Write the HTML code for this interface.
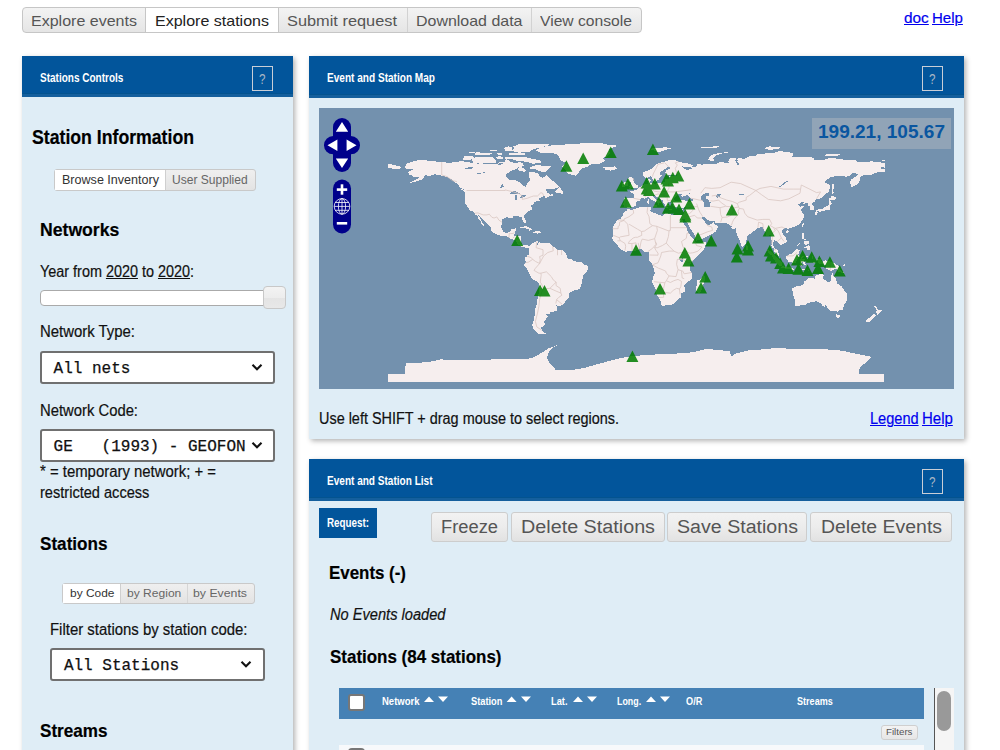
<!DOCTYPE html>
<html><head><meta charset="utf-8">
<style>
*{box-sizing:border-box;margin:0;padding:0}
html,body{width:1000px;height:750px;overflow:hidden;background:#fff;font-family:"Liberation Sans",sans-serif;color:#111}
.a{position:absolute}
.t{position:absolute;white-space:pre;line-height:1;transform-origin:0 0}
.panel{position:absolute;background:#dfedf6;box-shadow:2px 2px 5px rgba(0,0,0,.30)}
.hdr{position:absolute;background:linear-gradient(to bottom,#02559b 0,#02559b calc(100% - 4px),#03538f calc(100% - 4px),#03538f calc(100% - 3px),#145f9d calc(100% - 3px))}
.hlp{position:absolute;border:1px solid #c9ced6}
.lnk{color:#0000ee;text-decoration:underline}
.sel{position:absolute;background:#fff;border:2px solid #707070;border-radius:3px}
.tog{position:absolute;border:1px solid #c9c9c9;border-radius:3px;background:linear-gradient(#efefef,#e3e3e3);overflow:hidden}
.btn{position:absolute;border:1px solid #cdcdcd;border-radius:3px;background:linear-gradient(#f2f2f2 0%,#ececec 50%,#e2e2e2 100%)}
u{text-decoration:underline}
</style></head><body>
<div class="a" style="left:22.00px;top:7.00px;width:620.00px;height:26.00px;border:1px solid #c6c6c6;border-radius:4px;background:linear-gradient(#f3f3f3,#e5e5e5);"></div>
<div class="a" style="left:145.00px;top:7.00px;width:134.00px;height:26.00px;background:#fff;border:1px solid #c6c6c6;"></div>
<div class="a" style="left:407.00px;top:8.00px;width:1.00px;height:24.00px;background:#d2d2d2;"></div>
<div class="a" style="left:531.00px;top:8.00px;width:1.00px;height:24.00px;background:#d2d2d2;"></div>
<span class="t fit" style="left: 31px; top: 13.3px; font-size: 15px; color: rgb(85, 85, 85); --w: 106; transform: scaleX(1.0682);">Explore events</span>
<span class="t fit" style="left: 155px; top: 13.3px; font-size: 15px; color: rgb(34, 34, 34); --w: 114; transform: scaleX(1.0681);">Explore stations</span>
<span class="t fit" style="left: 287px; top: 13.3px; font-size: 15px; color: rgb(85, 85, 85); --w: 110; transform: scaleX(1.0903);">Submit request</span>
<span class="t fit" style="left: 415.5px; top: 13.3px; font-size: 15px; color: rgb(85, 85, 85); --w: 106.5; transform: scaleX(1.0642);">Download data</span>
<span class="t fit" style="left: 540px; top: 13.3px; font-size: 15px; color: rgb(85, 85, 85); --w: 92; transform: scaleX(1.044);">View console</span>
<span class="t fit" style="left: 904.1px; top: 10.08px; font-size: 15.5px; color: rgb(0, 0, 238); --w: 24.8; -webkit-text-stroke: 0.2px currentcolor; text-decoration: underline; transform: scaleX(0.992);">doc</span>
<span class="t fit" style="left: 932.4px; top: 10.08px; font-size: 15.5px; color: rgb(0, 0, 238); --w: 30.9; -webkit-text-stroke: 0.2px currentcolor; text-decoration: underline; transform: scaleX(0.9689);">Help</span>
<div class="panel" style="left:22.00px;top:56.00px;width:271.00px;height:744.00px;"></div>
<div class="hdr" style="left:22.00px;top:56.00px;width:271.00px;height:41.00px;"></div>
<span class="t fit" style="left: 39.9px; top: 71.54px; font-size: 12px; font-weight: 700; color: rgb(255, 255, 255); --w: 83.4; transform: scaleX(0.8339);">Stations Controls</span>
<div class="hlp" style="left:252.00px;top:66.00px;width:21.00px;height:25.00px;"></div>
<span class="t fit" style="left: 259px; top: 72.15px; font-size: 14px; color: rgb(170, 182, 196); --w: 6.5; transform: scaleX(0.8337);">?</span>
<span class="t fit" style="left: 32px; top: 127.07px; font-size: 20px; font-weight: 700; color: rgb(0, 0, 0); --w: 162; -webkit-text-stroke: 0.2px currentcolor; transform: scaleX(0.8837);">Station Information</span>
<div class="tog" style="left:54.00px;top:169.00px;width:201.50px;height:21.50px;"></div>
<div class="a" style="left:55.00px;top:170.00px;width:109.50px;height:19.50px;background:#fff;"></div>
<div class="a" style="left:164.50px;top:170.00px;width:1.00px;height:19.50px;background:#cfcfcf;"></div>
<span class="t fit" style="left: 62px; top: 174.34px; font-size: 12px; color: rgb(51, 51, 51); --w: 97; transform: scaleX(1.0462);">Browse Inventory</span>
<span class="t fit" style="left: 172px; top: 174.34px; font-size: 12px; color: rgb(102, 102, 102); --w: 75.7; transform: scaleX(1.0043);">User Supplied</span>
<span class="t fit" style="left: 39.6px; top: 220.32px; font-size: 19px; font-weight: 700; color: rgb(0, 0, 0); --w: 79.3; -webkit-text-stroke: 0.2px currentcolor; transform: scaleX(0.9271);">Networks</span>
<span class="t fit" style="left: 40px; top: 263.76px; font-size: 16px; color: rgb(17, 17, 17); --w: 154; -webkit-text-stroke: 0.2px currentcolor; transform: scaleX(0.9001);">Year from <u>2020</u> to <u>2020</u>:</span>
<div class="a" style="left:40.00px;top:290.00px;width:226.00px;height:16.00px;background:#fff;border:1px solid #aaa;border-radius:4px 0 0 4px;"></div>
<div class="a" style="left:263.00px;top:286.00px;width:23.00px;height:23.00px;background:linear-gradient(#f3f3f3 0%,#ededed 50%,#e4e4e4 51%,#e8e8e8 100%);border:1px solid #c8c8c8;border-radius:4px;"></div>
<span class="t fit" style="left: 40px; top: 324.46px; font-size: 16px; color: rgb(17, 17, 17); --w: 95; -webkit-text-stroke: 0.2px currentcolor; transform: scaleX(0.9317);">Network Type:</span>
<div class="sel" style="left:40.00px;top:351.00px;width:235.00px;height:33.00px;"></div>
<span class="t" style="left:53.60px;top:361.04px;font-size:16px;color:#111;font-family:'Liberation Mono',monospace;-webkit-text-stroke:0.25px currentColor;">All nets</span>
<svg class="a" style="left:251px;top:363px" width="12" height="9" viewBox="0 0 12 9"><path d="M1.5 1.8 L6 6.3 L10.5 1.8" fill="none" stroke="#111" stroke-width="2.1"></path></svg>
<span class="t fit" style="left: 40px; top: 402.86px; font-size: 16px; color: rgb(17, 17, 17); --w: 98; -webkit-text-stroke: 0.2px currentcolor; transform: scaleX(0.926);">Network Code:</span>
<div class="sel" style="left:40.00px;top:429.00px;width:235.00px;height:33.00px;"></div>
<span class="t" style="left:53.60px;top:438.64px;font-size:16px;color:#111;font-family:'Liberation Mono',monospace;-webkit-text-stroke:0.25px currentColor;">GE   (1993) - GEOFON</span>
<svg class="a" style="left:251px;top:441px" width="12" height="9" viewBox="0 0 12 9"><path d="M1.5 1.8 L6 6.3 L10.5 1.8" fill="none" stroke="#111" stroke-width="2.1"></path></svg>
<span class="t fit" style="left: 40px; top: 464.46px; font-size: 16px; color: rgb(17, 17, 17); --w: 176; -webkit-text-stroke: 0.2px currentcolor; transform: scaleX(0.9313);">* = temporary network; + =</span>
<span class="t fit" style="left: 40px; top: 484.96px; font-size: 16px; color: rgb(17, 17, 17); --w: 109.4; -webkit-text-stroke: 0.2px currentcolor; transform: scaleX(0.9113);">restricted access</span>
<span class="t fit" style="left: 39.9px; top: 533.62px; font-size: 19px; font-weight: 700; color: rgb(0, 0, 0); --w: 67.5; -webkit-text-stroke: 0.2px currentcolor; transform: scaleX(0.9006);">Stations</span>
<div class="tog" style="left:62.00px;top:583.00px;width:193.00px;height:21.00px;"></div>
<div class="a" style="left:63.00px;top:584.00px;width:56.50px;height:19.00px;background:#fff;"></div>
<div class="a" style="left:119.50px;top:584.00px;width:1.00px;height:19.00px;background:#cfcfcf;"></div>
<div class="a" style="left:186.50px;top:584.00px;width:1.00px;height:19.00px;background:#d6d6d6;"></div>
<span class="t fit" style="left: 70px; top: 588.47px; font-size: 11.5px; color: rgb(51, 51, 51); --w: 44.4; transform: scaleX(1.0363);">by Code</span>
<span class="t fit" style="left: 126.7px; top: 588.47px; font-size: 11.5px; color: rgb(102, 102, 102); --w: 54.3; transform: scaleX(1.0483);">by Region</span>
<span class="t fit" style="left: 193.3px; top: 588.47px; font-size: 11.5px; color: rgb(102, 102, 102); --w: 54; transform: scaleX(1.0693);">by Events</span>
<span class="t fit" style="left: 50px; top: 622.06px; font-size: 16px; color: rgb(17, 17, 17); --w: 197.5; -webkit-text-stroke: 0.2px currentcolor; transform: scaleX(0.9331);">Filter stations by station code:</span>
<div class="sel" style="left:50.00px;top:648.00px;width:215.00px;height:33.00px;"></div>
<span class="t" style="left:63.90px;top:658.04px;font-size:16px;color:#111;font-family:'Liberation Mono',monospace;-webkit-text-stroke:0.25px currentColor;">All Stations</span>
<svg class="a" style="left:240px;top:660px" width="12" height="9" viewBox="0 0 12 9"><path d="M1.5 1.8 L6 6.3 L10.5 1.8" fill="none" stroke="#111" stroke-width="2.1"></path></svg>
<span class="t fit" style="left: 39.9px; top: 721.02px; font-size: 19px; font-weight: 700; color: rgb(0, 0, 0); --w: 67.4; -webkit-text-stroke: 0.2px currentcolor; transform: scaleX(0.8987);">Streams</span>
<div class="panel" style="left:309.00px;top:56.00px;width:655.00px;height:382.50px;"></div>
<div class="hdr" style="left:309.00px;top:56.00px;width:655.00px;height:42.00px;"></div>
<span class="t fit" style="left: 327px; top: 71.84px; font-size: 12px; font-weight: 700; color: rgb(255, 255, 255); --w: 108; transform: scaleX(0.8392);">Event and Station Map</span>
<div class="hlp" style="left:922.00px;top:66.00px;width:21.00px;height:25.00px;"></div>
<span class="t fit" style="left: 929px; top: 72.15px; font-size: 14px; color: rgb(170, 182, 196); --w: 6.5; transform: scaleX(0.8337);">?</span>
<svg class="a" style="left:319px;top:108px" width="635" height="281" viewBox="0 0 635 281" shape-rendering="crispEdges">
<rect width="635" height="281" fill="#7391ae"></rect>
<path d="M69.0,55.6 74.5,57.0 80.0,58.0 82.8,59.1 80.0,61.1 74.5,60.7 69.0,59.8ZM85.5,59.6 87.6,55.9 92.4,53.8 101.0,51.8 107.6,52.5 113.1,53.1 122.7,54.0 131.0,54.9 139.3,53.6 141.3,52.7 148.9,54.2 155.8,55.1 161.3,56.0 168.2,55.6 173.7,56.3 182.0,56.6 184.7,54.9 187.5,51.1 190.2,52.9 195.8,55.6 199.9,54.1 204.0,54.9 204.7,58.4 199.2,58.8 197.1,61.1 192.0,62.8 187.5,66.0 187.2,69.0 189.6,71.5 195.8,72.2 199.9,73.8 203.6,77.3 206.8,79.0 208.2,74.9 210.9,72.4 210.2,68.7 209.5,64.2 215.0,64.2 219.2,65.7 221.2,68.8 224.0,69.7 227.4,67.1 229.5,69.4 232.3,72.2 235.7,74.2 238.5,77.0 240.3,78.4 237.8,80.0 234.3,80.8 228.8,80.8 225.4,82.2 228.1,82.8 227.4,84.1 231.6,86.6 234.3,86.3 234.3,87.3 230.2,88.6 226.5,89.9 225.4,88.0 224.0,88.7 220.6,89.9 219.5,91.4 220.6,92.5 217.8,93.2 215.0,94.2 214.8,95.6 212.3,97.4 213.0,101.5 210.9,102.5 208.2,104.3 205.4,106.6 205.1,109.4 206.8,113.1 206.5,115.3 205.1,115.4 204.3,113.5 203.1,111.4 202.9,109.4 201.3,108.7 198.5,108.1 194.4,108.3 194.0,110.0 192.3,109.8 187.5,109.4 183.1,111.7 182.7,115.6 182.3,119.4 183.1,121.8 184.7,123.8 186.8,124.9 190.2,124.4 191.9,123.1 192.6,121.1 197.1,120.4 196.4,123.8 195.5,125.9 195.3,128.0 198.5,128.1 201.3,128.2 202.2,129.3 202.0,132.8 201.7,134.8 204.0,137.3 207.5,136.9 210.4,138.0 210.6,139.1 209.3,140.1 206.5,139.9 205.0,139.0 202.6,138.6 198.9,136.2 196.4,132.1 194.0,131.5 190.9,130.7 188.9,128.6 186.1,128.0 183.4,128.1 179.2,126.9 174.4,124.8 171.6,122.4 171.6,118.6 169.6,116.9 166.4,114.2 164.1,111.6 162.4,110.0 158.8,106.5 160.6,109.4 161.6,111.4 162.7,113.5 164.8,116.7 165.4,118.4 163.8,116.9 162.4,116.0 162.0,113.5 159.7,111.4 158.6,108.3 156.2,106.3 155.5,104.9 153.7,103.2 150.8,102.5 149.0,99.6 148.2,98.1 146.4,95.6 145.7,94.3 145.5,90.8 146.2,85.9 145.2,83.3 146.8,83.5 144.8,81.1 140.9,80.0 140.0,77.7 137.2,74.9 135.8,74.2 133.1,71.5 129.6,69.8 127.6,69.1 124.1,67.7 120.0,67.3 115.8,66.2 113.1,67.3 108.3,68.4 107.9,66.4 105.5,68.3 104.1,70.8 101.4,72.2 98.6,73.1 95.2,73.8 91.7,74.8 90.1,74.9 95.2,72.6 99.3,70.6 100.0,69.1 96.6,69.3 93.8,69.3 93.4,67.3 89.7,66.6 89.3,63.9 91.7,62.9 95.2,61.1 91.7,61.0 88.3,61.0 85.5,59.6ZM216.4,42.3 222.6,45.0 233.0,45.0 237.1,46.0 239.8,48.3 241.2,51.5 242.6,52.9 246.7,54.5 245.4,56.3 243.3,58.7 246.0,61.1 248.1,64.6 250.2,66.0 256.4,67.6 258.4,66.6 260.5,63.2 263.3,59.8 267.4,59.3 272.9,56.0 281.2,55.5 286.0,52.9 283.9,50.1 287.4,48.7 290.8,45.3 290.1,41.2 293.6,39.5 300.5,37.7 289.4,37.0 282.6,35.2 272.9,34.8 261.9,35.4 250.9,36.3 241.2,36.7 234.3,37.0 228.8,38.0 223.3,39.2 219.2,40.7 216.4,42.3ZM283.5,59.6 284.6,58.7 287.4,58.7 292.2,58.8 295.6,58.4 297.0,59.6 298.3,60.4 296.3,61.4 291.5,62.6 288.1,62.1 285.7,62.0 286.7,60.7 283.5,59.6ZM231.9,58.1 228.1,62.1 226.1,64.3 220.6,63.2 217.1,61.4 210.2,61.4 211.6,59.3 216.4,57.3 215.7,55.6 223.3,54.2 220.6,52.5 213.7,50.8 206.8,49.1 198.5,48.6 193.0,49.1 193.7,51.5 199.9,53.3 206.8,53.6 210.9,54.9 215.0,56.3 223.3,57.7 231.9,58.1ZM154.4,54.9 161.3,55.6 171.0,55.2 177.2,54.9 177.2,52.2 173.7,49.4 165.4,48.7 158.6,49.0 153.7,50.1 153.0,52.2 154.4,54.9ZM144.1,51.5 151.7,51.8 155.8,50.1 153.0,47.6 145.5,47.6 144.1,51.5ZM193.0,39.1 199.9,36.3 213.7,35.6 231.6,36.6 223.3,39.1 213.7,41.4 209.5,44.2 199.9,44.6 193.0,43.2ZM190.2,47.1 205.4,47.2 206.8,45.0 193.0,44.6 190.2,45.6ZM186.1,42.5 193.0,42.5 195.8,39.1 188.9,38.4 184.7,39.8ZM155.8,46.7 171.0,46.7 173.7,45.3 157.2,44.3ZM179.2,46.7 183.4,46.9 183.4,45.3 177.8,44.9ZM148.9,44.6 157.2,43.6 154.4,45.3ZM171.0,42.5 180.6,41.4 176.5,43.2ZM176.5,50.1 183.4,51.5 184.7,48.7 179.2,48.3ZM179.2,55.6 184.7,54.9 184.7,54.0 180.6,54.2ZM186.1,50.8 193.0,50.8 193.0,48.7 186.1,48.7ZM198.5,62.1 206.1,64.2 206.8,62.1 202.6,59.1 198.5,59.8ZM210.4,138.0 212.3,136.6 213.0,135.4 215.0,134.6 217.1,133.7 218.5,132.9 219.2,134.2 218.2,135.5 218.5,136.9 219.5,134.8 220.6,134.2 222.6,135.3 226.1,135.4 228.8,135.4 230.9,135.4 232.3,136.5 233.6,138.3 235.7,139.5 237.8,141.5 240.5,141.9 243.3,142.3 245.6,143.8 246.7,145.2 248.1,147.5 248.1,149.6 250.2,151.1 252.2,151.0 255.7,153.3 259.1,153.9 262.6,154.1 265.3,156.5 268.4,157.3 268.9,160.3 268.1,163.1 265.3,166.3 263.7,168.6 263.3,174.1 262.2,177.1 260.8,180.3 259.1,181.7 255.7,182.1 252.2,183.8 250.2,185.8 249.8,189.3 247.8,191.6 246.0,194.0 243.6,196.6 241.4,198.1 239.2,197.9 236.5,197.1 238.2,198.9 237.8,202.4 235.0,203.5 231.3,203.6 231.2,205.9 227.4,206.5 228.8,208.3 229.4,209.0 227.4,209.9 226.6,212.0 224.0,213.9 226.3,215.9 224.0,218.2 221.9,220.0 222.8,222.1 225.4,225.1 227.2,225.6 224.7,226.1 222.6,226.5 219.2,225.5 216.4,223.3 214.4,221.0 213.0,216.8 214.4,214.1 215.0,210.6 215.6,207.9 215.5,204.4 216.1,201.3 217.1,198.2 218.4,195.5 218.5,191.3 218.9,187.9 219.9,184.4 220.0,181.7 220.4,177.6 220.1,175.2 217.8,173.4 213.4,171.1 211.9,169.0 210.5,166.3 208.8,162.4 207.1,159.9 205.4,158.3 205.0,156.5 206.4,154.8 207.1,153.2 205.5,152.1 206.5,149.3 207.5,148.6 208.4,147.5 209.8,146.3 210.2,144.5 210.5,142.0 210.1,140.4 210.4,138.0ZM308.9,100.7 307.6,102.9 305.3,104.1 303.8,105.2 303.5,107.8 301.2,111.0 299.1,111.7 297.0,113.9 295.0,116.9 293.6,120.5 294.3,123.1 294.5,125.9 293.2,129.6 294.0,132.8 295.6,134.2 297.0,135.5 298.7,137.3 299.8,139.7 302.5,141.5 304.6,143.1 306.7,143.9 309.4,143.0 312.9,143.0 314.9,143.1 318.4,141.9 320.4,141.3 323.2,141.3 325.3,144.1 327.3,143.9 329.0,143.7 330.2,145.2 330.5,147.9 329.8,150.0 329.7,152.1 332.2,154.8 333.5,156.9 333.9,159.0 334.9,161.0 335.3,163.1 336.0,165.2 334.4,168.6 333.3,173.4 333.3,175.1 334.9,178.2 337.0,181.6 337.4,185.8 338.4,187.9 339.7,189.4 340.8,192.0 342.1,194.1 341.8,195.5 342.4,197.0 343.9,197.8 345.1,197.8 347.3,197.0 351.4,196.8 353.5,196.4 355.6,195.2 357.6,193.1 359.7,191.1 361.8,189.3 361.9,185.8 363.2,184.7 365.6,183.5 365.9,180.3 365.2,177.6 368.0,174.1 370.7,172.7 372.9,170.7 372.8,165.2 371.4,162.4 371.1,159.6 370.5,158.3 371.4,156.5 372.4,153.9 374.2,152.3 375.6,150.7 377.6,148.6 380.4,146.6 382.4,144.2 384.2,142.4 385.9,139.0 387.0,136.2 387.7,133.7 385.2,134.3 382.4,134.6 379.7,135.4 377.6,135.5 376.7,134.0 376.0,132.8 374.6,131.4 372.1,129.1 371.0,127.7 370.0,125.2 368.3,123.0 367.7,120.4 366.0,117.6 364.5,114.5 363.6,112.4 361.8,108.9 361.5,106.9 359.0,106.6 356.3,107.3 351.7,106.5 349.4,105.6 346.6,104.8 344.6,106.6 343.9,108.3 341.8,107.6 338.4,106.3 335.2,104.7 332.8,104.1 331.1,102.9 332.2,101.1 331.5,99.3 330.5,98.6 328.4,99.2 326.0,98.9 322.5,99.2 319.1,99.6 316.2,100.7 314.0,101.6 310.8,101.5 308.9,100.7ZM384.9,166.5 386.3,170.7 386.2,172.0 385.2,174.1 383.8,178.2 382.0,183.8 379.3,185.1 377.6,183.8 377.1,181.7 376.7,179.6 377.9,177.3 377.6,174.1 378.3,172.3 381.1,171.4 382.4,170.0 383.8,168.6 384.9,166.5ZM309.3,100.4 308.2,99.3 306.7,98.7 304.6,99.0 304.9,97.2 303.9,96.5 304.7,94.2 305.0,92.4 304.2,90.8 306.0,89.8 309.4,90.1 312.9,90.2 314.9,90.1 315.3,87.3 314.0,85.0 310.8,84.0 310.5,83.2 312.9,82.8 314.9,82.9 314.9,81.5 317.3,81.8 319.1,80.8 319.5,79.7 321.8,79.2 323.2,77.7 323.9,76.6 326.6,76.3 328.7,76.2 329.0,74.2 328.3,72.2 328.8,71.3 331.6,70.5 331.3,72.2 331.9,72.8 330.5,74.2 331.5,75.0 333.5,75.3 336.3,75.7 339.0,75.2 342.8,74.9 344.6,74.4 346.1,73.3 346.1,71.5 348.0,70.5 350.1,71.5 350.5,69.5 349.4,68.4 352.8,68.0 355.6,68.0 358.3,67.5 356.3,66.6 353.5,66.8 351.4,67.1 348.6,67.6 346.6,66.0 346.3,63.9 347.3,62.5 350.8,60.7 351.9,60.2 350.8,59.3 347.6,59.5 346.3,60.7 344.6,62.1 342.5,63.2 340.8,64.6 340.7,66.2 343.0,67.1 342.6,68.0 340.7,69.1 340.0,70.8 339.5,72.2 337.1,72.8 336.6,73.7 334.8,73.4 334.2,72.2 333.3,70.5 332.4,68.7 331.5,68.2 331.1,68.7 329.4,69.0 328.0,70.1 326.0,70.0 324.7,68.7 323.9,66.6 323.9,64.9 324.6,63.9 327.3,63.2 330.1,62.1 332.2,61.1 334.2,59.1 335.6,57.7 337.7,56.0 339.7,55.2 343.2,54.0 346.6,53.3 349.4,52.5 352.5,52.0 355.6,52.2 358.3,52.9 359.7,53.8 362.5,54.5 366.6,54.9 370.7,56.0 373.5,57.0 373.5,58.4 369.4,59.1 365.2,58.7 362.5,58.2 365.2,60.4 368.0,61.8 372.8,61.1 372.1,59.3 376.2,58.7 378.0,58.4 377.3,55.6 380.4,56.0 383.1,56.7 387.3,55.9 390.7,55.5 394.2,55.6 398.3,55.6 400.4,54.2 402.4,54.0 406.6,54.7 410.0,55.6 411.4,55.2 409.3,53.6 410.0,51.5 412.1,49.7 415.5,49.6 416.9,50.8 416.2,52.9 417.3,54.9 418.3,57.4 420.1,56.6 419.6,55.6 417.6,53.6 419.6,52.2 417.6,51.5 419.6,50.1 423.1,50.4 424.5,50.8 427.9,50.1 427.2,48.7 432.7,48.3 436.6,48.0 436.9,46.7 442.4,45.7 450.6,45.3 456.2,44.6 460.7,42.9 463.7,43.5 464.4,44.5 469.9,44.3 474.1,45.4 473.4,48.7 478.2,48.6 482.3,49.4 486.5,49.1 490.6,48.7 494.0,49.7 495.4,51.5 498.2,52.3 501.6,51.5 505.8,51.5 509.9,50.1 516.8,50.4 523.7,51.5 527.1,52.5 531.9,52.2 536.8,52.5 538.8,54.1 544.3,54.1 548.5,53.8 551.9,53.4 558.1,53.8 562.2,54.5 566.4,54.9 566.4,59.8 562.9,59.1 561.6,60.4 563.6,61.1 566.4,60.4 566.4,63.9 563.6,64.2 560.9,63.9 556.7,64.9 554.0,66.0 551.2,67.3 546.4,67.3 543.0,67.6 541.6,68.7 540.9,70.4 541.6,72.2 540.2,72.8 539.8,74.9 537.4,76.6 535.4,77.7 532.9,79.7 531.9,77.7 531.2,74.2 531.7,71.5 534.0,70.4 537.4,68.0 539.5,66.6 536.8,65.3 533.3,65.3 530.6,68.3 526.4,68.7 524.8,68.0 520.9,68.3 516.8,68.3 512.9,68.7 509.9,70.4 507.1,72.2 505.5,74.8 508.5,75.5 510.6,76.7 511.5,78.1 510.6,80.4 510.3,83.2 507.8,85.2 505.8,87.0 503.0,89.7 500.2,91.0 498.2,90.8 496.9,91.7 495.7,93.5 493.4,94.9 492.7,95.6 494.0,97.2 495.1,99.0 495.3,101.1 494.0,101.8 491.3,102.5 491.0,101.1 491.4,99.0 490.6,97.9 489.2,97.9 489.5,96.5 488.8,95.2 486.5,95.4 484.4,96.3 484.1,94.9 485.4,94.1 483.7,93.8 481.6,95.0 479.6,96.1 479.2,97.1 480.7,98.5 481.6,98.7 483.4,97.9 485.8,98.6 483.7,99.7 482.3,100.7 481.4,101.8 482.7,103.4 483.6,105.2 485.0,106.3 485.0,107.4 484.4,108.1 485.1,108.9 484.4,110.7 483.0,112.1 481.9,114.2 480.5,116.1 478.2,117.5 475.4,118.7 473.4,119.4 471.3,120.1 469.2,120.8 468.8,122.0 468.1,120.4 465.8,120.2 464.0,121.5 462.8,123.8 463.7,125.6 465.1,127.3 466.9,129.1 467.6,132.1 467.5,134.2 465.8,135.3 464.0,135.8 461.7,138.2 461.4,136.2 459.6,135.5 458.2,133.5 455.9,132.5 455.1,131.5 454.6,133.5 453.7,135.8 454.2,137.3 455.2,138.6 455.6,140.4 456.8,140.6 457.8,141.5 459.2,143.1 459.5,144.5 460.0,146.6 460.6,148.1 459.6,148.2 458.2,147.2 456.6,146.1 455.5,144.2 455.2,142.4 455.1,141.0 454.2,140.1 452.7,139.0 452.4,136.9 453.0,135.0 452.7,133.2 452.0,130.0 451.6,127.3 450.6,126.9 448.6,128.2 447.1,128.0 446.9,124.5 445.8,123.1 444.2,121.1 443.5,119.3 441.7,119.0 439.6,120.0 436.9,121.1 436.6,122.0 434.1,123.4 432.0,125.2 430.3,126.6 428.6,128.2 427.6,131.1 427.4,134.2 426.9,135.8 425.8,137.3 424.7,137.7 423.8,138.8 422.4,137.9 421.7,135.5 421.0,133.7 420.1,131.4 419.2,129.6 418.3,128.0 417.6,125.6 417.3,123.8 417.3,121.1 416.9,119.7 416.2,120.8 414.5,121.3 412.8,120.0 412.1,119.0 413.7,118.6 411.4,117.6 410.0,117.2 409.0,115.8 406.6,115.1 402.4,115.3 399.0,115.0 396.2,114.5 395.5,112.8 394.4,112.5 392.1,113.4 389.3,112.0 388.0,111.6 386.2,109.8 384.4,108.7 383.1,108.9 383.4,110.7 384.5,112.1 386.2,113.4 386.6,115.3 387.3,116.2 388.0,114.9 388.4,116.7 390.7,116.9 392.8,115.8 394.2,114.9 394.6,113.8 394.8,115.8 396.2,117.2 398.0,117.6 399.4,119.0 397.6,121.8 396.6,123.8 394.8,124.8 393.2,125.9 390.7,127.0 388.6,128.4 385.2,129.9 383.1,130.7 379.7,131.8 378.3,132.5 376.9,132.5 376.2,130.0 375.8,128.0 375.3,126.2 374.2,124.5 372.8,122.7 371.4,121.1 370.7,119.0 369.8,116.9 368.4,115.3 367.3,113.8 365.9,111.7 365.2,111.1 364.9,109.4 364.3,111.4 362.9,111.0 361.9,108.9 361.5,107.0 364.1,106.9 364.8,105.9 365.2,104.5 365.9,103.3 366.3,101.8 366.3,100.5 366.9,99.4 365.2,99.4 363.8,100.0 361.8,100.3 359.0,99.8 357.0,99.4 354.9,99.0 354.2,97.4 353.5,95.9 353.1,94.9 352.8,93.8 350.1,93.8 348.4,94.2 349.5,95.0 348.1,95.9 350.1,97.4 348.0,97.9 349.0,99.6 348.0,99.8 346.9,99.2 346.2,97.9 346.6,97.0 345.5,96.3 344.4,95.3 343.7,94.3 343.9,92.8 342.6,91.7 341.1,90.8 339.6,90.1 337.9,89.1 336.7,87.7 335.9,87.2 333.9,87.4 333.9,88.8 335.6,89.9 336.6,91.4 338.4,92.1 339.3,92.3 340.7,93.5 342.5,94.8 342.2,95.2 340.7,94.3 339.9,95.6 340.6,96.4 339.9,97.0 339.0,97.8 338.6,97.4 338.8,95.6 337.7,94.6 336.6,93.8 334.9,93.2 333.9,92.4 332.2,91.6 331.2,90.1 329.3,88.8 327.3,89.7 326.0,90.6 324.3,90.3 322.5,90.1 321.1,90.8 321.4,92.1 320.0,93.0 318.1,93.5 317.0,95.0 316.6,95.9 317.3,96.7 316.0,98.2 314.9,98.6 313.7,99.3 310.9,99.4 309.3,100.4ZM309.1,81.0 311.5,80.6 312.9,80.1 315.6,80.0 318.9,79.5 319.3,77.5 317.4,76.8 317.0,76.2 315.6,74.9 314.8,73.4 314.0,72.3 314.5,70.6 312.6,69.3 310.1,69.3 309.1,70.8 308.5,71.7 309.4,73.1 310.1,74.2 312.5,74.4 312.3,75.6 312.9,76.4 310.7,76.6 311.2,77.9 309.8,78.8 312.2,79.2 310.8,79.7 309.1,81.0ZM308.7,78.1 308.6,76.4 308.7,75.6 309.3,74.8 308.5,73.9 306.7,73.8 305.3,74.5 303.2,75.3 303.5,76.6 302.9,78.4 303.9,78.9 305.6,78.8 307.4,78.2 308.7,78.1ZM334.1,97.6 335.6,97.4 338.5,97.2 337.9,98.6 337.8,99.4 336.3,99.0 334.2,98.2ZM328.3,93.5 330.2,93.2 330.5,94.9 330.1,96.1 328.7,96.4 328.4,94.9ZM328.8,91.6 330.0,90.8 330.2,91.7 329.7,93.0 329.0,92.5ZM349.4,101.0 353.2,101.4 352.8,101.8 350.1,101.8ZM361.5,101.8 364.5,101.0 363.8,102.3 361.8,102.2ZM332.2,41.8 332.8,40.1 339.0,39.8 345.9,39.4 354.2,39.8 347.3,41.8 343.2,43.2 339.0,44.6 335.6,42.8ZM388.6,51.5 391.4,52.5 395.5,52.9 394.2,50.1 396.9,47.4 402.4,45.6 410.7,44.2 412.1,43.9 403.8,44.6 395.5,46.0 391.4,48.0 390.0,50.1ZM449.3,41.8 458.9,41.2 461.7,39.1 450.6,38.4 445.1,40.1ZM504.4,46.7 512.6,46.0 523.7,46.7 516.8,48.0 507.1,48.0ZM380.4,39.1 396.9,38.4 405.2,38.7 395.5,39.8 383.1,39.8ZM563.6,51.9 566.4,51.5 566.4,52.5 562.9,52.5ZM512.6,86.6 514.7,85.2 514.0,81.8 515.4,78.4 514.3,75.3 513.3,75.6 512.6,79.0 513.1,83.9ZM497.5,102.5 499.6,101.2 502.3,100.8 504.4,100.4 505.8,99.0 507.8,98.3 509.5,96.7 509.9,94.2 510.6,93.1 512.0,93.1 512.6,95.6 511.3,97.6 511.0,100.1 511.0,101.5 509.5,102.1 507.8,102.3 505.8,102.3 504.4,103.4 503.0,103.4 503.0,102.5 500.9,102.7 498.6,103.3ZM509.9,92.8 511.3,92.5 514.7,92.1 517.5,90.3 516.8,89.1 512.6,87.3 512.0,89.4 510.6,90.3 509.9,91.7ZM496.1,106.6 498.2,106.9 498.7,104.5 497.5,103.2 495.7,103.8ZM499.6,104.5 502.3,104.1 502.4,102.9 499.6,103.2ZM483.3,119.7 484.7,116.2 484.8,115.3 483.0,116.2 482.5,118.3ZM466.6,124.5 468.6,124.9 469.9,123.1 469.2,122.3 467.2,122.7ZM427.2,136.5 428.9,138.3 429.7,140.1 428.6,141.7 427.2,141.6 426.8,139.0ZM448.3,142.3 451.3,142.8 455.2,147.0 459.6,151.1 461.0,152.6 463.0,154.4 462.8,158.0 461.0,158.1 457.9,155.5 456.2,153.4 454.8,151.1 453.1,147.9 451.3,146.6 449.3,144.8 448.3,142.3ZM461.9,159.4 463.7,158.3 466.2,158.7 469.2,159.4 472.0,159.5 474.8,160.7 474.6,162.0 471.3,161.4 467.2,160.7 463.7,160.2 461.9,159.4ZM475.4,161.3 476.8,161.6 481.0,161.6 485.8,161.3 486.5,161.8 481.0,162.1 476.8,162.3ZM487.8,163.1 492.0,161.6 489.2,163.1 487.3,164.2ZM467.2,147.9 468.6,147.7 470.6,146.3 473.1,145.6 476.1,142.8 478.2,140.4 479.6,141.7 481.4,142.8 479.9,143.8 479.3,147.2 480.8,148.8 478.9,149.6 477.9,152.1 477.5,153.4 476.8,155.2 474.8,154.8 472.7,154.4 470.6,154.1 468.8,154.0 468.6,152.2 467.5,150.7 467.2,147.9ZM481.6,157.6 481.0,154.8 480.7,153.4 481.6,150.7 482.3,149.0 483.7,148.3 486.5,148.8 489.2,147.9 488.5,149.4 484.1,149.4 482.7,151.4 484.4,151.2 486.9,151.2 484.7,152.5 485.8,154.4 486.7,156.6 485.1,156.5 484.1,155.8 483.4,153.9 482.9,157.6ZM492.7,147.2 494.0,147.9 493.4,149.3 494.5,151.1 492.8,150.7 492.7,148.6ZM493.4,154.4 497.2,155.2 496.1,154.3ZM497.5,151.4 499.6,150.6 501.9,151.2 503.0,154.5 506.4,152.2 508.5,153.0 511.3,153.6 515.4,155.2 517.9,156.8 520.2,158.4 520.9,161.0 523.7,163.8 524.8,164.6 522.3,164.5 519.5,163.8 518.2,161.4 515.4,160.6 514.0,162.4 511.3,162.7 508.5,161.2 507.1,161.6 506.9,157.6 503.7,156.2 500.2,155.5 498.9,153.9 497.5,151.4ZM522.3,158.3 526.4,157.6 525.7,155.9 523.7,158.0ZM483.2,124.5 485.4,124.5 485.5,126.6 484.8,128.6 484.4,130.4 487.8,132.1 487.2,132.8 483.7,131.0 483.0,129.7 482.3,128.0 482.9,127.1ZM485.1,133.5 489.9,132.8 490.6,135.1 487.8,136.9 485.8,136.9 484.8,134.8ZM485.1,140.4 485.8,138.7 487.8,138.4 489.9,136.5 491.3,139.0 491.3,141.0 489.9,142.3 487.8,141.2 487.2,139.3ZM478.5,138.4 481.6,134.6 481.0,134.2 478.2,137.6ZM473.0,180.3 474.1,180.0 477.5,178.4 480.7,178.0 483.7,176.9 485.5,174.1 485.4,172.7 487.2,172.7 488.5,170.9 490.6,169.6 493.1,169.7 494.7,170.4 495.7,170.9 496.4,167.9 497.5,166.8 499.7,166.7 499.6,165.8 501.6,166.4 504.4,166.5 505.5,167.1 504.2,168.6 503.7,170.4 505.1,171.5 507.1,172.9 509.2,174.0 511.0,174.1 512.0,171.4 512.1,167.9 512.9,165.2 513.7,165.4 514.7,169.0 516.1,169.7 517.2,170.7 517.5,173.1 518.6,175.9 520.2,176.9 522.3,178.2 524.4,181.0 525.7,183.1 527.9,185.1 528.5,188.6 527.9,192.0 527.1,194.8 525.3,196.7 524.4,198.9 523.7,201.7 520.9,202.1 518.6,203.9 516.8,202.4 515.4,203.3 512.0,202.9 509.9,201.7 509.3,200.3 507.8,198.9 507.3,197.0 506.9,195.7 506.4,197.9 505.1,198.9 504.2,197.9 503.3,197.5 501.6,195.2 498.9,194.1 497.5,193.4 494.7,193.7 490.6,194.5 487.8,195.5 487.2,196.7 484.4,196.6 481.6,196.8 479.6,198.2 477.5,198.2 475.4,197.3 475.7,196.2 476.4,194.8 476.3,192.7 475.4,190.6 474.9,189.3 474.1,186.5 473.4,185.1 473.8,183.8 473.4,182.1 473.0,180.3ZM516.4,206.1 518.8,206.8 521.3,206.4 521.3,208.1 520.2,209.5 518.2,210.1 517.1,208.3 516.4,206.1ZM554.9,197.4 557.1,198.9 558.8,201.0 559.5,201.9 562.9,201.9 562.1,204.0 560.7,204.4 559.8,206.2 557.8,206.9 557.6,204.7 556.5,204.1 557.6,202.6 557.4,201.0 555.4,198.5ZM554.9,205.8 557.1,206.9 556.6,208.3 554.9,210.1 552.6,211.3 551.9,213.1 549.8,214.2 546.4,213.4 546.8,212.3 548.9,210.6 551.9,209.0 553.6,207.2ZM199.9,120.0 204.0,118.7 206.8,118.0 210.2,119.7 213.0,121.3 214.8,122.2 210.2,122.6 209.5,121.3 205.4,120.1 202.6,120.2ZM214.4,124.6 216.7,122.6 220.6,122.9 222.8,124.4 220.6,124.9 218.5,125.6 214.6,125.2ZM209.1,124.6 211.9,124.9 210.9,125.5ZM224.4,124.5 226.6,124.6 226.3,125.2 224.4,125.2ZM235.3,84.4 240.5,78.9 242.6,81.8 244.4,83.9 244.0,85.8 239.8,85.2 236.4,84.3ZM147.1,83.5 144.1,82.5 140.1,80.0 142.0,80.7 145.5,82.2ZM69.0,265.7 85.5,265.7 86.9,255.4 96.6,255.0 110.3,254.0 121.4,251.4 137.9,252.0 151.7,251.7 165.4,252.0 179.2,250.9 193.0,250.6 206.8,250.9 212.3,250.3 217.8,247.5 223.3,244.4 228.8,240.7 235.7,238.2 239.8,236.1 237.1,237.9 233.0,240.2 230.2,243.0 228.8,246.4 228.1,250.6 230.2,254.7 234.3,258.8 237.1,262.3 245.4,262.3 255.0,261.6 264.6,260.2 271.5,258.2 278.4,256.1 286.7,254.0 296.3,251.3 306.0,249.2 317.0,247.8 321.1,247.5 337.7,246.4 351.4,246.2 362.5,245.1 372.1,244.4 379.0,243.0 388.6,240.5 396.9,242.0 410.7,243.0 412.1,248.8 416.2,245.8 421.7,244.4 430.0,242.3 441.0,241.6 450.6,240.7 458.9,239.7 468.6,240.7 475.4,240.9 485.1,241.2 493.4,240.5 503.0,240.9 509.9,241.6 519.5,242.3 527.8,243.7 537.4,245.8 544.3,247.1 552.6,248.8 549.8,252.0 545.7,255.4 541.6,258.8 539.8,263.0 540.2,265.7 565.0,265.7 565.0,274.0 69.0,274.0Z" fill="#f6eeee" fill-rule="nonzero"></path>
<path d="M354.9,91.4 355.6,90.1 356.4,89.0 357.8,87.7 359.3,85.9 360.8,85.9 363.2,86.6 361.8,87.3 363.2,88.7 365.2,88.3 367.3,87.7 370.0,85.2 371.1,85.0 369.4,86.6 369.1,88.0 370.0,89.0 372.1,90.2 374.2,92.1 374.3,92.8 372.1,93.6 369.4,93.6 367.3,93.1 365.2,92.1 362.5,92.3 360.4,93.2 357.2,93.2 355.9,92.7 354.9,91.4ZM381.8,88.3 384.5,85.9 388.0,85.2 390.0,85.5 390.0,87.3 387.3,88.6 387.3,90.5 389.6,92.1 390.0,93.8 391.8,93.9 391.1,96.3 391.3,98.6 387.3,99.3 384.5,98.1 385.2,94.6 382.4,92.1 382.4,90.1 381.8,88.3ZM396.9,86.6 401.7,85.9 401.0,88.7 398.3,90.1 396.9,88.3ZM190.2,85.7 195.8,82.8 200.6,85.5 197.8,85.9 193.0,85.9ZM196.0,92.1 196.4,87.3 198.5,87.3 197.8,92.1ZM201.3,90.1 202.0,86.6 206.8,87.3 204.7,89.4ZM180.6,81.1 183.4,75.6 184.7,78.4ZM144.8,60.4 154.4,58.4 153.0,61.1ZM155.8,66.0 166.8,63.9 164.1,65.3ZM459.6,79.0 467.2,73.1 468.6,73.5 461.7,78.8ZM419.0,86.6 425.8,85.5 425.2,87.3ZM360.4,151.4 363.8,150.4 363.8,154.1 361.1,153.4Z" fill="#7391ae"></path>
<path d="M122.7,54.1 L122.7,66.9 L128.2,68.7 L133.8,72.8 L137.9,73.5M147.5,82.5 L186.1,82.5 L186.1,81.9 L194.4,83.9 L200.6,85.9 L203.3,88.0 L203.3,91.4 L208.2,90.3 L212.3,88.7 L214.4,88.0 L218.5,88.0 L221.9,84.7 L223.6,85.2 L224.7,88.0M155.7,105.2 L159.0,104.9 L164.1,106.9 L167.9,106.9 L170.3,106.2 L173.0,109.4 L175.1,110.0 L177.8,108.9 L179.9,112.1 L183.1,114.3M190.0,130.0 L190.2,125.5 L191.6,125.5 L194.1,125.5 L195.3,124.5M194.0,130.2 L195.5,128.4M196.0,132.1 L200.3,129.3M198.9,134.8 L201.8,134.8M202.8,139.0 L203.2,136.8M217.8,133.7 L217.1,139.7 L224.0,141.7 L224.0,147.2 L220.6,148.6 L221.2,151.4 L220.6,155.5M233.6,138.3 L234.3,142.8 L228.8,144.5 L224.7,147.9 L220.6,155.5 L216.4,160.3 L215.0,162.4 L219.9,165.2 L221.9,165.2 L227.4,163.8 L232.3,168.6 L234.3,172.0 L237.1,174.1 L237.1,177.6 L241.2,180.3 L241.9,185.1 L242.9,187.2 L239.8,189.3 L237.6,191.6 L243.3,196.4M222.6,222.1 L217.8,218.9 L216.4,213.4 L218.5,205.1 L219.9,198.2 L220.6,191.3 L222.6,184.4 L224.7,181.0 L222.6,176.2 L221.2,174.1M221.2,174.1 L222.2,167.2 L221.9,165.2M224.7,181.0 L230.9,180.3 L234.3,176.9 L237.1,174.1M230.9,180.3 L237.1,183.1 L241.9,185.1M206.4,154.7 L209.5,154.1 L213.7,151.4 L216.4,153.4 L220.6,155.5M208.2,148.2 L212.3,149.7 L213.7,151.4M238.5,141.7 L238.5,147.2M242.6,142.0 L242.6,147.0M237.6,191.6 L236.8,195.5M314.2,101.8 L314.7,105.2 L310.1,108.7 L305.0,111.0 L305.0,112.4 L299.1,111.8M293.6,120.7 L299.1,120.7 L299.1,118.3 L300.5,117.6 L300.5,114.2 L305.0,112.4 L308.7,116.2 L310.1,127.3 L301.2,128.9 L300.2,129.7 L294.3,127.3M310.1,116.2 L318.4,121.1 L322.5,123.5 L325.3,123.1 L333.5,117.6 L337.7,118.3 L350.1,123.1M328.7,99.2 L328.0,104.5 L330.1,108.7 L330.8,115.6 L333.5,117.6M351.4,106.6 L351.4,119.7 L351.4,122.4 L350.1,122.4 L350.1,123.1M351.4,119.7 L368.0,119.7M337.7,118.3 L338.4,122.4 L335.6,130.7 L336.3,133.5 L337.7,136.2 L335.6,139.7 L338.4,139.7 L343.2,137.6 L347.3,135.1 L349.4,128.6 L350.1,123.1M322.0,133.9 L323.2,131.1 L329.4,132.4 L335.6,130.7M322.5,123.5 L322.8,127.3 L318.4,129.3 L316.3,129.3 L314.2,130.0 L310.1,133.5 L309.4,135.5M350.1,138.3 L354.9,143.1 L359.4,145.2 L363.8,144.2 L365.9,142.4 L363.8,138.3 L362.5,133.5 L367.3,130.3 L368.0,125.2 L370.0,125.2M347.3,135.1 L350.1,138.3M376.2,134.2 L377.6,137.6 L383.1,139.0 L379.0,143.1 L374.9,144.5 L373.5,144.8 L370.7,145.2 L365.9,142.4M374.2,152.3 L372.1,154.1 L368.7,154.8 L363.8,151.4 L358.3,151.4 L357.6,156.2 L359.0,161.7 L363.8,163.1 L365.2,165.8 L372.8,164.5M333.5,156.9 L334.9,156.2 L339.0,154.8 L341.8,147.9 L342.5,144.5 L350.1,143.1 L354.9,143.1M330.5,147.0 L339.0,147.2 L339.0,145.2 L337.0,142.4 L335.6,139.7M333.5,156.9 L339.7,160.3 L341.8,161.0 L346.6,163.1 L347.3,165.2 L350.1,167.9 L347.3,172.7 L345.9,174.8 L334.9,173.7M347.3,172.7 L351.4,174.5 L354.9,172.7 L359.0,171.4 L362.5,173.4 L361.8,178.9 L360.4,181.0M345.9,174.8 L344.6,180.3 L344.6,184.4 L344.6,189.3 L339.7,189.4M344.6,184.4 L351.4,185.1 L354.2,182.4 L357.6,180.3 L360.4,181.0 L361.1,186.5M350.1,167.9 L357.0,168.6 L359.0,161.7M362.5,163.1 L363.2,170.0 L365.2,170.7M300.2,129.7 L301.3,132.9M298.4,132.8 L301.8,132.8 L306.0,135.5 L306.7,138.3 L306.0,142.4M309.4,135.5 L312.9,135.5 L313.1,142.8M313.1,135.5 L317.0,134.8 L317.0,139.0 L318.4,141.7M319.1,134.8 L320.7,141.0M320.7,141.0 L322.0,133.9M328.7,143.7 L333.5,140.4 L337.0,136.2 L336.3,133.5M307.4,92.1 L306.7,98.7M314.5,90.3 L321.4,91.6M320.4,79.7 L325.3,81.1 L328.0,82.5 L327.3,84.6 L325.3,86.3 L326.6,89.4M333.5,68.7 L334.2,66.0 L336.3,61.8 L339.0,56.3 L345.2,54.9M350.1,59.3 L345.9,54.9M358.3,67.3 L356.3,60.4 L358.3,57.0 L356.3,54.9 L359.7,53.6M349.4,75.6 L350.1,79.7 L348.0,83.9 L355.6,83.9 L372.1,81.8M336.3,75.6 L337.7,79.7 L333.5,81.1 L334.9,83.2 L340.4,83.9 L348.7,83.2M381.8,85.2 L385.9,79.7 L392.8,80.4 L401.0,79.7 L412.1,74.2 L421.7,75.6 L436.9,82.5M436.9,82.5 L441.0,80.4 L452.0,78.4 L464.4,81.1 L474.1,81.1 L481.6,81.1 L482.3,77.0 L492.0,81.8 L497.5,84.6 L501.6,83.9 L497.5,90.8M436.9,82.5 L442.4,86.6 L449.3,91.4 L461.7,92.8 L469.9,90.8 L481.0,85.2 L481.6,81.1M436.9,82.5 L430.7,87.3 L427.2,89.4 L427.2,92.1 L420.3,94.2 L418.3,95.6 L419.6,99.0 L420.3,100.4M420.3,100.4 L424.5,101.1 L425.8,105.2 L428.6,108.7 L438.2,112.1 L443.8,111.4 L450.6,111.4 L452.7,115.6 L451.3,117.6 L456.2,120.4 L463.0,119.0 L465.8,120.4M420.3,100.4 L419.0,103.2 L419.6,105.9 L414.8,111.4 L413.4,114.2 L412.8,116.5 L411.1,117.6M419.6,99.0 L415.5,99.7 L414.1,103.8 L412.1,107.3 L408.6,108.9 L403.1,109.5 L401.7,114.2M401.0,99.7 L401.7,106.6 L403.1,109.5M391.4,98.3 L401.0,99.7 L406.6,98.3 L410.0,98.6 L415.5,99.7M377.6,95.6 L378.7,98.7 L379.7,101.8 L381.1,104.5 L383.8,108.7M366.6,100.4 L374.9,98.7 L378.7,98.7M374.9,98.7 L373.8,102.5 L370.7,105.5 L368.0,106.6 L370.7,108.7 L375.6,107.3 L378.3,110.0 L383.1,110.0M376.2,126.9 L381.8,126.6 L388.6,123.8 L393.5,122.4 L392.8,119.0 L388.6,117.6 L388.0,116.2M452.7,136.2 L453.4,129.3 L452.0,126.6 L456.2,122.4 L454.8,120.4M456.2,120.4 L458.9,122.4 L460.3,125.2 L462.4,130.0 L465.1,133.5M458.2,133.5 L462.4,130.0M454.8,141.0 L456.8,142.0 L457.5,141.5M438.9,119.7 L439.6,114.2 L443.8,115.6 L444.4,121.1M467.9,147.9 L474.1,147.9 L478.2,144.2M511.3,153.6 L511.3,162.7M372.1,90.2 L380.4,92.1 L383.8,92.4M392.8,88.0 L396.9,87.3 L402.4,90.1 L407.9,92.1 L413.4,93.5 L418.3,95.6M391.4,92.8 L394.2,93.1 L399.7,92.1 L402.4,94.9 L406.6,97.6M355.6,83.9 L358.3,85.9M348.0,83.9 L344.6,86.6 L348.0,88.7 L348.4,92.8 L352.8,92.1 L355.6,89.8M335.9,87.2 L339.0,85.9 L343.2,86.6 L346.6,89.4M314.2,70.2 L314.9,72.8" fill="none" stroke="#d9c6c2" stroke-width="0.8" shape-rendering="auto"></path>
<path d="M192.2,138.0h12l-6,-11.5zM215.0,188.0h12l-6,-11.5zM219.5,188.5h12l-6,-11.5zM307.4,254.0h12l-6,-11.5zM241.4,63.8h12l-6,-11.5zM258.2,56.1h12l-6,-11.5zM285.7,49.9h12l-6,-11.5zM327.9,46.9h12l-6,-11.5zM296.8,83.5h12l-6,-11.5zM303.0,81.5h12l-6,-11.5zM300.8,99.8h12l-6,-11.5zM321.7,80.5h12l-6,-11.5zM321.7,86.6h12l-6,-11.5zM324.0,88.0h12l-6,-11.5zM329.8,81.6h12l-6,-11.5zM341.5,76.5h12l-6,-11.5zM343.0,78.5h12l-6,-11.5zM347.8,75.3h12l-6,-11.5zM353.3,73.5h12l-6,-11.5zM339.1,89.5h12l-6,-11.5zM333.8,99.8h12l-6,-11.5zM351.2,94.6h12l-6,-11.5zM364.4,101.6h12l-6,-11.5zM343.0,105.8h12l-6,-11.5zM347.4,105.0h12l-6,-11.5zM354.0,107.0h12l-6,-11.5zM360.3,112.6h12l-6,-11.5zM360.3,114.5h12l-6,-11.5zM311.0,147.8h12l-6,-11.5zM373.0,135.6h12l-6,-11.5zM386.2,138.6h12l-6,-11.5zM359.8,150.6h12l-6,-11.5zM363.4,158.6h12l-6,-11.5zM335.0,186.6h12l-6,-11.5zM380.2,174.6h12l-6,-11.5zM376.0,185.4h12l-6,-11.5zM406.9,107.6h12l-6,-11.5zM443.7,128.5h12l-6,-11.5zM412.5,146.4h12l-6,-11.5zM423.0,143.6h12l-6,-11.5zM423.0,147.5h12l-6,-11.5zM411.8,154.5h12l-6,-11.5zM444.7,148.5h12l-6,-11.5zM446.0,153.4h12l-6,-11.5zM451.0,155.5h12l-6,-11.5zM455.2,161.1h12l-6,-11.5zM458.0,165.5h12l-6,-11.5zM463.6,166.0h12l-6,-11.5zM472.0,157.6h12l-6,-11.5zM477.6,153.4h12l-6,-11.5zM473.4,166.7h12l-6,-11.5zM482.5,168.0h12l-6,-11.5zM486.7,154.8h12l-6,-11.5zM493.0,166.0h12l-6,-11.5zM494.4,159.0h12l-6,-11.5zM504.9,159.7h12l-6,-11.5zM514.7,168.5h12l-6,-11.5z" fill="#007d00" fill-opacity="0.86" shape-rendering="auto"></path>
</svg>
<svg class="a" style="left:0;top:0" width="1000" height="750">
<g fill="#00008b"><rect x="333" y="118" width="18" height="54" rx="9"></rect><rect x="324" y="136" width="36" height="18.3" rx="9.1"></rect><rect x="333" y="179.5" width="18" height="54" rx="9"></rect></g>
<g fill="#fff"><path d="M342 122L348.2 131.7H335.8Z M342 168L348.2 158.6H335.8Z M327.5 145.2L337.4 139.4V151Z M356.5 145.2L346.6 139.4V151Z"></path>
<rect x="336.8" y="188.3" width="10.4" height="2.6"></rect><rect x="340.7" y="184.3" width="2.6" height="10.4"></rect><rect x="336.8" y="222" width="10.4" height="2.6"></rect></g>
<g fill="none" stroke="#fff" stroke-width="0.8"><circle cx="342" cy="206.4" r="7.8"></circle><ellipse cx="342" cy="206.4" rx="3.6" ry="7.8"></ellipse><path d="M334.2 206.4H349.8 M335.2 202.5H348.8 M335.2 210.3H348.8 M342 198.6V214.2"></path></g>
</svg>
<div class="a" style="left:812px;top:118px;width:139px;height:31px;background:rgba(200,200,200,0.35)"></div>
<span class="t fit" style="left: 818px; top: 122.5px; font-size: 18.5px; font-weight: 700; color: rgb(10, 86, 160); --w: 127; transform: scaleX(1.0287);">199.21, 105.67</span>
<span class="t fit" style="left: 319.2px; top: 411.46px; font-size: 16px; color: rgb(17, 17, 17); --w: 300; -webkit-text-stroke: 0.2px currentcolor; transform: scaleX(0.9016);">Use left SHIFT + drag mouse to select regions.</span>
<span class="t fit" style="left: 870.1px; top: 411.06px; font-size: 16px; color: rgb(0, 0, 238); --w: 48.6; -webkit-text-stroke: 0.2px currentcolor; text-decoration: underline; transform: scaleX(0.9103);">Legend</span>
<span class="t fit" style="left: 922.3px; top: 411.06px; font-size: 16px; color: rgb(0, 0, 238); --w: 30.8; -webkit-text-stroke: 0.2px currentcolor; text-decoration: underline; transform: scaleX(0.936);">Help</span>
<div class="panel" style="left:309.00px;top:459.00px;width:655.00px;height:341.00px;"></div>
<div class="hdr" style="left:309.00px;top:459.00px;width:655.00px;height:42.00px;"></div>
<span class="t fit" style="left: 326.7px; top: 474.54px; font-size: 12px; font-weight: 700; color: rgb(255, 255, 255); --w: 105.5; transform: scaleX(0.8372);">Event and Station List</span>
<div class="hlp" style="left:922.00px;top:469.00px;width:21.00px;height:25.00px;"></div>
<span class="t fit" style="left: 929px; top: 475.15px; font-size: 14px; color: rgb(170, 182, 196); --w: 6.5; transform: scaleX(0.8337);">?</span>
<div class="a" style="left:319.00px;top:508.00px;width:58.00px;height:29.50px;background:#02559b;"></div>
<span class="t fit" style="left: 327px; top: 516.84px; font-size: 12px; font-weight: 700; color: rgb(255, 255, 255); --w: 42; transform: scaleX(0.818);">Request:</span>
<div class="btn" style="left:431.30px;top:511.50px;width:77.00px;height:30.00px;"></div>
<span class="t fit" style="left: 441.4px; top: 517.76px; font-size: 18px; color: rgb(85, 85, 85); --w: 57; transform: scaleX(1.0173);">Freeze</span>
<div class="btn" style="left:510.50px;top:511.50px;width:154.00px;height:30.00px;"></div>
<span class="t fit" style="left: 520.6px; top: 517.76px; font-size: 18px; color: rgb(85, 85, 85); --w: 134; transform: scaleX(1.0977);">Delete Stations</span>
<div class="btn" style="left:667.40px;top:511.50px;width:140.10px;height:30.00px;"></div>
<span class="t fit" style="left: 677px; top: 517.76px; font-size: 18px; color: rgb(85, 85, 85); --w: 121; transform: scaleX(1.0893);">Save Stations</span>
<div class="btn" style="left:810.30px;top:511.50px;width:141.40px;height:30.00px;"></div>
<span class="t fit" style="left: 820.6px; top: 517.76px; font-size: 18px; color: rgb(85, 85, 85); --w: 121; transform: scaleX(1.0798);">Delete Events</span>
<span class="t fit" style="left: 329px; top: 563.12px; font-size: 19px; font-weight: 700; color: rgb(0, 0, 0); --w: 77; -webkit-text-stroke: 0.2px currentcolor; transform: scaleX(0.8894);">Events (-)</span>
<span class="t fit" style="left: 329.9px; top: 606.56px; font-size: 16px; color: rgb(17, 17, 17); --w: 115.5; -webkit-text-stroke: 0.2px currentcolor; font-style: italic; transform: scaleX(0.9144);">No Events loaded</span>
<span class="t fit" style="left: 329.9px; top: 646.92px; font-size: 19px; font-weight: 700; color: rgb(0, 0, 0); --w: 171.5; -webkit-text-stroke: 0.2px currentcolor; transform: scaleX(0.8925);">Stations (84 stations)</span>
<div class="a" style="left:339.00px;top:688.00px;width:585.00px;height:30.80px;background:#4581b5;"></div>
<div class="a" style="left:347.60px;top:693.60px;width:17.40px;height:17.00px;background:#fff;border:2px solid #777;border-radius:3px;"></div>
<span class="t fit" style="left: 381.5px; top: 695.69px; font-size: 11px; font-weight: 700; color: rgb(255, 255, 255); --w: 37.5; transform: scaleX(0.8639);">Network</span>
<span class="t fit" style="left: 470.6px; top: 695.69px; font-size: 11px; font-weight: 700; color: rgb(255, 255, 255); --w: 31.4; transform: scaleX(0.8422);">Station</span>
<span class="t fit" style="left: 551.3px; top: 695.69px; font-size: 11px; font-weight: 700; color: rgb(255, 255, 255); --w: 16.5; transform: scaleX(0.8435);">Lat.</span>
<span class="t fit" style="left: 616.6px; top: 695.69px; font-size: 11px; font-weight: 700; color: rgb(255, 255, 255); --w: 24.1; transform: scaleX(0.805);">Long.</span>
<span class="t fit" style="left: 686.2px; top: 695.69px; font-size: 11px; font-weight: 700; color: rgb(255, 255, 255); --w: 16.3; transform: scaleX(0.8332);">O/R</span>
<span class="t fit" style="left: 797.2px; top: 695.69px; font-size: 11px; font-weight: 700; color: rgb(255, 255, 255); --w: 35.8; transform: scaleX(0.8245);">Streams</span>
<svg class="a" style="left:0;top:0" width="1000" height="750"><g fill="#fff"><path d="M424 702 L429 696.6 L434 702Z M438 696.6 L448 696.6 L443 702Z"></path><path d="M506.6 702 L511.6 696.6 L516.6 702Z M521 696.6 L531 696.6 L526 702Z"></path><path d="M573 702 L578 696.6 L583 702Z M587 696.6 L597 696.6 L592 702Z"></path><path d="M646 702 L651 696.6 L656 702Z M660 696.6 L670 696.6 L665 702Z"></path></g></svg>
<div class="a" style="left:880.50px;top:724.50px;width:37.00px;height:15.00px;border:1px solid #cfcfcf;border-radius:3px;background:linear-gradient(#f3f3f3,#e6e6e6);"></div>
<span class="t fit" style="left: 885.5px; top: 727.46px; font-size: 9.5px; color: rgb(85, 85, 85); --w: 26.5; transform: scaleX(1.0242);">Filters</span>
<div class="a" style="left:339.00px;top:745.00px;width:585.00px;height:15.00px;background:#f7f9fb;"></div>
<div class="a" style="left:347.50px;top:748.00px;width:17.50px;height:14.00px;background:#777;border-radius:4px;"></div>
<div class="a" style="left:934.00px;top:688.00px;width:20.00px;height:72.00px;background:#f5f5f5;border-left:1px solid #555;"></div>
<div class="a" style="left:937.00px;top:691.00px;width:14.00px;height:40.00px;background:#999;border-radius:7px;"></div>

</body></html>
